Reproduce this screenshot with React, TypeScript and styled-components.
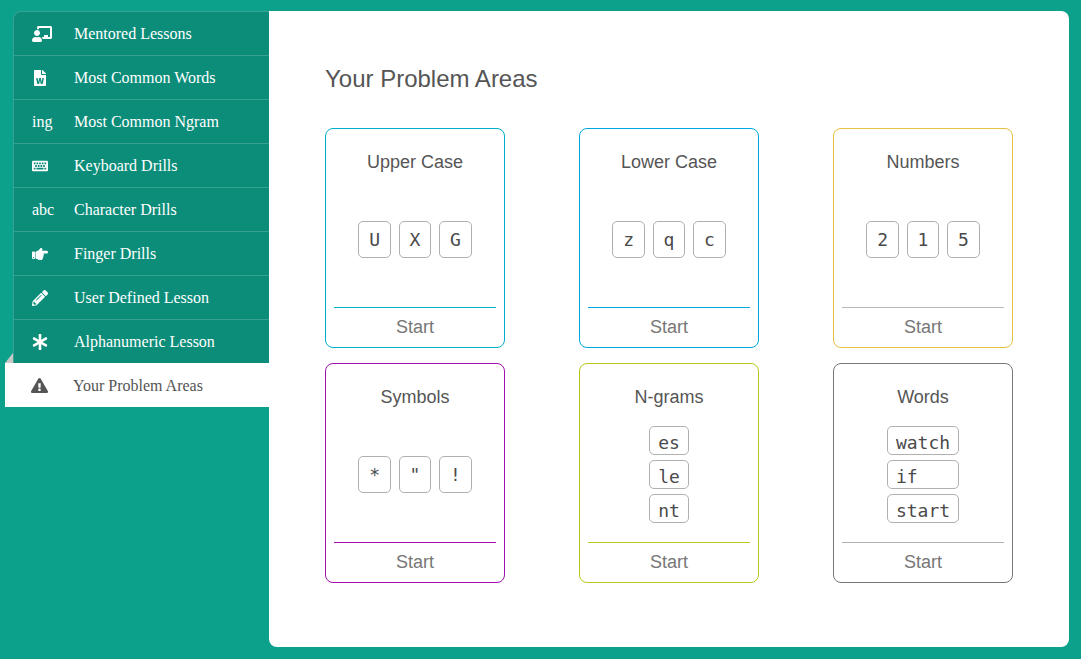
import React from "react";
import styled, { createGlobalStyle } from "styled-components";
import { FaChalkboardTeacher, FaFileWord, FaKeyboard, FaHandPointRight, FaPencilAlt, FaAsterisk, FaExclamationTriangle } from "react-icons/fa";

const Global = createGlobalStyle`
  html, body { margin: 0; padding: 0; height: 100%; background: #0ca18a; overflow: hidden; }
  * { box-sizing: border-box; }
`;

const Page = styled.div`
  display: flex;
  height: 659px;
  padding: 11px 12px 12px 13px;
  align-items: stretch;
`;

const Sidebar = styled.nav`
  width: 256px;
  flex: none;
  display: flex;
  flex-direction: column;
`;

const NavItem = styled.div<{ $active?: boolean; $first?: boolean }>`
  position: relative;
  height: 44px;
  display: flex;
  align-items: center;
  padding-top: ${(p) => (p.$active ? "1px" : "0")};
  font: 16px "Liberation Serif", serif;
  color: ${(p) => (p.$active ? "#555" : "#fff")};
  background: ${(p) => (p.$active ? "#fff" : "#0c8d79")};
  margin-left: ${(p) => (p.$active ? "-8px" : "0")};
  padding-left: ${(p) => (p.$active ? "8px" : "0")};
  border-left: ${(p) => (p.$active ? "none" : "1px solid #37a292")};
  border-top: ${(p) => (p.$active ? "none" : "1px solid #37a292")};
  border-top-left-radius: ${(p) => (p.$first ? "8px" : "0")};
  ${(p) =>
    p.$active
      ? `&::before {
          content: "";
          position: absolute;
          left: 0;
          top: -10px;
          border-left: 8px solid transparent;
          border-bottom: 10px solid #c8c8c8;
        }`
      : ""}
`;

const NavIcon = styled.span`
  width: 60px;
  flex: none;
  padding-left: 18px;
  display: flex;
  align-items: center;
  font-size: 16px;
  line-height: 1;
  svg { display: block; }
`;

const Panel = styled.main`
  flex: 1;
  background: #fff;
  border-radius: 0 8px 8px 8px;
  padding: 56px;
`;

const Title = styled.h1`
  margin: 0 0 36px;
  height: 25px;
  font: 400 24px/24px "Liberation Sans", Arial, sans-serif;
  color: #555;
`;

const Grid = styled.div`
  display: grid;
  grid-template-columns: repeat(3, 180px);
  grid-auto-rows: 220px;
  column-gap: 74px;
  row-gap: 15px;
`;

const Card = styled.section<{ $color: string }>`
  border: 1px solid ${(p) => p.$color};
  border-radius: 8px;
  display: flex;
  flex-direction: column;
  padding: 0 8px;
`;

const CardTitle = styled.h2`
  margin: 23px 0 0;
  height: 20px;
  font: 400 18px/21px "Liberation Sans", Arial, sans-serif;
  color: #555;
  text-align: center;
`;

const Body = styled.div`
  flex: 1;
  display: flex;
  align-items: center;
  justify-content: center;
`;

const KeyRow = styled.div`
  display: flex;
  gap: 7.66px;
`;

const KeyStack = styled.div`
  display: flex;
  flex-direction: column;
  gap: 5px;
  padding-bottom: 1px;
`;

const Key = styled.span`
  width: 32.66px;
  height: 37px;
  border: 1px solid #b0b0b0;
  border-radius: 5px;
  display: flex;
  align-items: center;
  justify-content: center;
  font: 18px "DejaVu Sans Mono", monospace;
  color: #4a4a4a;
`;

const Gram = styled.span`
  height: 29px;
  border: 1px solid #b0b0b0;
  border-radius: 5px;
  padding: 0 8px;
  display: block;
  font: 18px/31px "DejaVu Sans Mono", monospace;
  color: #4a4a4a;
  white-space: pre;
`;

const Footer = styled.div<{ $color: string }>`
  height: 40px;
  border-top: 1px solid ${(p) => p.$color};
  font: 18px/38px "Liberation Sans", Arial, sans-serif;
  color: #777;
  text-align: center;
`;

const nav: { icon: React.ReactNode; label: string }[] = [
  { icon: <FaChalkboardTeacher size={20} />, label: "Mentored Lessons" },
  { icon: <FaFileWord size={16} />, label: "Most Common Words" },
  { icon: "ing", label: "Most Common Ngram" },
  { icon: <FaKeyboard size={16} />, label: "Keyboard Drills" },
  { icon: "abc", label: "Character Drills" },
  { icon: <FaHandPointRight size={16} />, label: "Finger Drills" },
  { icon: <FaPencilAlt size={16} />, label: "User Defined Lesson" },
  { icon: <FaAsterisk size={16} />, label: "Alphanumeric Lesson" },
  { icon: <FaExclamationTriangle size={17} />, label: "Your Problem Areas" },
];

const cards = [
  { title: "Upper Case", color: "#00b0ca", keys: ["U", "X", "G"] },
  { title: "Lower Case", color: "#00a8e0", keys: ["z", "q", "c"] },
  { title: "Numbers", color: "#e8c040", line: "#b8b8b8", keys: ["2", "1", "5"] },
  { title: "Symbols", color: "#a010b0", keys: ["*", "\"", "!"] },
  { title: "N-grams", color: "#b8c820", grams: ["es", "le", "nt"] },
  { title: "Words", color: "#777", line: "#b0b0b0", grams: ["watch", "if   ", "start"] },
];

export default function App() {
  return (
    <Page>
      <Global />
      <Sidebar>
        {nav.map((n, i) => (
          <NavItem key={n.label} $first={i === 0} $active={i === nav.length - 1}>
            <NavIcon>{n.icon}</NavIcon>
            {n.label}
          </NavItem>
        ))}
      </Sidebar>
      <Panel>
        <Title>Your Problem Areas</Title>
        <Grid>
          {cards.map((c) => (
            <Card key={c.title} $color={c.color}>
              <CardTitle>{c.title}</CardTitle>
              <Body>
                {c.keys ? (
                  <KeyRow>{c.keys.map((k) => <Key key={k}>{k}</Key>)}</KeyRow>
                ) : (
                  <KeyStack>{c.grams!.map((g) => <Gram key={g}>{g}</Gram>)}</KeyStack>
                )}
              </Body>
              <Footer $color={c.line ?? c.color}>Start</Footer>
            </Card>
          ))}
        </Grid>
      </Panel>
    </Page>
  );
}
